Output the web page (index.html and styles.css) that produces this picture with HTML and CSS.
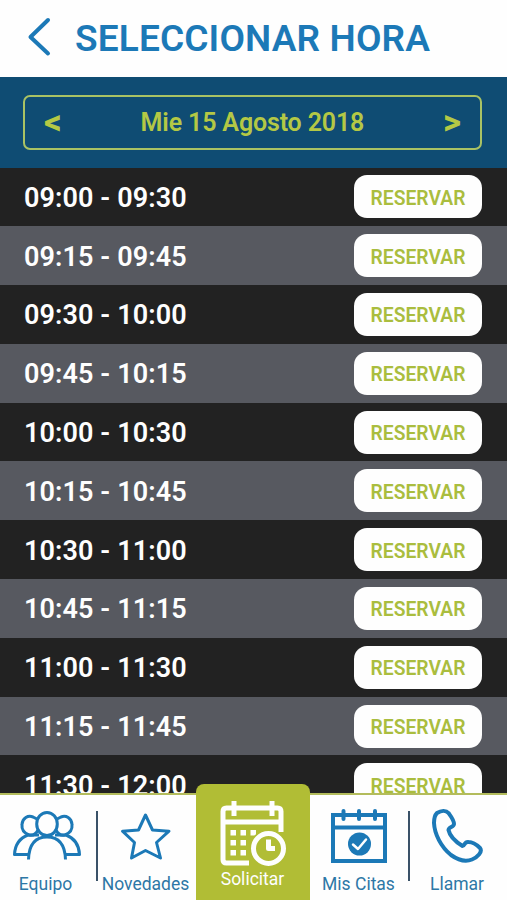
FILE: index.html
```
<!DOCTYPE html>
<html lang="es">
<head>
    <meta charset="UTF-8">
    <meta name="viewport" content="width=device-width, initial-scale=1.0">
    <title>Seleccionar hora</title>
    <link rel="stylesheet" href="styles.css">
</head>
<body>

<header class="header">
    <svg class="back" width="24" height="40" viewBox="0 0 24 40">
        <path d="M21 3 L3.500 20 L21 36.500"/>
    </svg>
    <h1>SELECCIONAR HORA</h1>
</header>

<section class="date-bar">
    <div class="date-picker">
        <span class="arrow">&lt;</span>
        <span class="date">Mie 15 Agosto 2018</span>
        <span class="arrow">&gt;</span>
    </div>
</section>

<ul class="hours">
    <li><span>09:00 - 09:30</span><button>RESERVAR</button></li>
    <li><span>09:15 - 09:45</span><button>RESERVAR</button></li>
    <li><span>09:30 - 10:00</span><button>RESERVAR</button></li>
    <li><span>09:45 - 10:15</span><button>RESERVAR</button></li>
    <li><span>10:00 - 10:30</span><button>RESERVAR</button></li>
    <li><span>10:15 - 10:45</span><button>RESERVAR</button></li>
    <li><span>10:30 - 11:00</span><button>RESERVAR</button></li>
    <li><span>10:45 - 11:15</span><button>RESERVAR</button></li>
    <li><span>11:00 - 11:30</span><button>RESERVAR</button></li>
    <li><span>11:15 - 11:45</span><button>RESERVAR</button></li>
    <li><span>11:30 - 12:00</span><button>RESERVAR</button></li>
</ul>

<nav class="tabs">
    <a class="tab tab-team">
        <svg width="70" height="56" viewBox="0 0 70 56">
            <path d="M27 23 C25 27 22 29 18 28 C13 26 10.500 22 11 17.500 C11.500 11 17 8 22 10 L26 12"/>
            <path d="M45 23 C47 27 50 29 54 28 C59 26 61.500 22 61 17.500 C60.500 11 55 8 50 10 L46 12"/>
            <ellipse cx="36" cy="17" rx="10.300" ry="11.500"/>
            <path d="M17.500 52.500 C18 37 25 30 36 30 C47 30 54 37 54.500 52.500"/>
            <path d="M28 28 H17 C9 31 4 38 3.500 47.500 H18"/>
            <path d="M44 28 H55 C63 31 68 38 68.500 47.500 H54"/>
        </svg>
        <span>Equipo</span>
    </a>
    <a class="tab divider-left">
        <svg width="70" height="56" viewBox="0 0 70 56">
            <path d="M34.500 8 L41.500 23 L58 24.200 L45.500 35.500 L49.500 51 L34.500 43.500 L20.500 51 L23.500 35.500 L11.500 24.200 L27.500 23 Z"/>
        </svg>
        <span>Novedades</span>
    </a>
    <a class="tab active">
        <svg width="70" height="68" viewBox="0 0 70 68">
            <path class="frame" d="M31 63 H8.500 Q5 63 5 59.500 V11.500 Q5 8 8.500 8 H59.500 Q63 8 63 11.500 V32 M5 22 H63"/>
            <path class="ring" d="M16 1 V16 M54 1 V16"/>
            <path class="dots" d="M12.500 30h5.500v5.500h-5.500z M22.500 30h5.500v5.500h-5.500z M32.500 30h5.500v5.500h-5.500z M12.500 40h5.500v5.500h-5.500z M22.500 40h5.500v5.500h-5.500z M12.500 50h5.500v5.500h-5.500z M22.500 50h5.500v5.500h-5.500z"/>
            <circle class="gap" cx="50.500" cy="48.500" r="19"/>
            <circle class="clock" cx="50.500" cy="48.500" r="15"/>
            <path class="hands" d="M50.500 39.500 V48.500 H57"/>
        </svg>
        <span>Solicitar</span>
    </a>
    <a class="tab">
        <svg width="70" height="56" viewBox="0 0 70 56">
            <path class="calendar" d="M9 8 H61 V54 H9 Z M9 20.500 H61"/>
            <path class="pins" d="M19.500 4 V12 M35 4 V12 M51 4 V12"/>
            <circle class="badge" cx="35.500" cy="37" r="11.500"/>
            <path class="check" d="M29 37.500 L34 42 L42 32.500"/>
        </svg>
        <span>Mis Citas</span>
    </a>
    <a class="tab divider-left">
        <svg width="70" height="56" viewBox="0 0 70 56">
            <path class="phone" d="M14 6 C18 3.500 23 3 25.500 6 C28 9.500 31 13 31 17 C31 20 25.500 20 25.500 23 C27 30 33 35 39.500 39 C42 39 41 34.500 45.500 35 C50 35 54 38 57 41 C60 45 54 50.500 49 52.500 C43 55 35 53 28 48 C18 40 11.500 27 11 16 C11 11 11.500 8.500 14 6 Z"/>
        </svg>
        <span>Llamar</span>
    </a>
</nav>

</body>
</html>
```

FILE: styles.css
```
* {
    margin: 0;
    padding: 0;
    box-sizing: border-box;
}

body {
    font-family: Roboto, 'Liberation Sans', sans-serif;
    background-color: #fefefe;
    display: flex;
    flex-direction: column;
    height: 900px;
    overflow: hidden;
}

.header {
    height: 77px;
    flex-shrink: 0;
    display: flex;
    align-items: center;
    padding: 0 26px 3px;
    color: #1c79b7;
}

.back {
    fill: none;
    stroke: #1c79b7;
    stroke-width: 4;
    stroke-linecap: round;
    stroke-linejoin: round;
    margin-left: 1px;
}

h1 {
    font-size: 37px;
    font-weight: 600;
    line-height: 44px;
    letter-spacing: 0.150px;
    margin-left: 24px;
    padding-top: 3px;
    white-space: nowrap;
}

.date-bar {
    height: 90.500px;
    flex-shrink: 0;
    padding: 18px 25px 17px 23px;
    background-color: #0f4c73;
}

.date-picker {
    height: 55px;
    display: flex;
    justify-content: space-between;
    align-items: center;
    padding: 0 19px;
    border: 2px solid #a9c264;
    border-radius: 7px;
    color: #b4c845;
    font-size: 25px;
    font-weight: 600;
    letter-spacing: -0.150px;
}

.arrow {
    font-size: 35px;
    font-weight: 700;
    line-height: 40px;
}

.hours {
    flex: 1;
    min-height: 0;
    overflow: hidden;
    list-style: none;
    background-color: #222222;
}

.hours li {
    height: 58.800px;
    display: flex;
    justify-content: space-between;
    align-items: center;
    padding: 0 25px 0 24px;
    color: #fefefe;
    font-size: 27px;
    font-weight: 600;
    letter-spacing: 0.1px;
}

.hours li span {
    padding-top: 2px;
}

.hours li:nth-child(even) {
    background-color: #575960;
}

.hours button {
    width: 128px;
    height: 43px;
    border: none;
    border-radius: 13px;
    background-color: #fefefe;
    color: #aabd3e;
    font-family: inherit;
    font-size: 19.300px;
    font-weight: 600;
    padding-top: 3px;
    cursor: pointer;
}

.tabs {
    height: 107px;
    flex-shrink: 0;
    display: grid;
    grid-template-columns: 96px 100px 114px 98px 99px;
    grid-template-rows: 105px;
    align-items: end;
    border-top: 2px solid #b3bc5c;
    background-color: #fefefe;
}

.tab {
    position: relative;
    height: 105px;
    display: flex;
    flex-direction: column;
    align-items: center;
    padding-top: 12px;
    color: #2d77a6;
    font-size: 17.500px;
    line-height: 20px;
    white-space: nowrap;
}

.tab span {
    padding-right: 1px;
}

.tab svg {
    fill: none;
    stroke: #1c79b7;
    stroke-width: 3;
    stroke-linejoin: round;
    margin-bottom: 11px;
}

.tab-team {
    padding-right: 4px;
}

.divider-left::before {
    content: '';
    position: absolute;
    left: 0;
    top: 16px;
    width: 2px;
    height: 70px;
    background-color: #3a5268;
}

.tab.active {
    height: 116px;
    padding-top: 16px;
    border-radius: 8px 8px 0 0;
    background-color: #b1bd35;
    color: #fefefe;
}

.tab.active svg {
    stroke: #fefefe;
    stroke-width: 5;
    margin-bottom: 1px;
}

.active .dots {
    fill: #fefefe;
    stroke: none;
}

.active .gap {
    fill: #b1bd35;
    stroke: none;
}

.tab .calendar,
.tab .phone {
    stroke-width: 4;
}

.tab .calendar {
    stroke-linejoin: miter;
}

.tab .pins {
    stroke-width: 4;
    stroke-linecap: round;
}

.tab .badge {
    fill: #1c79b7;
    stroke: none;
}

.tab .check {
    stroke: #fefefe;
    stroke-width: 2.500;
    stroke-linecap: round;
}
```
